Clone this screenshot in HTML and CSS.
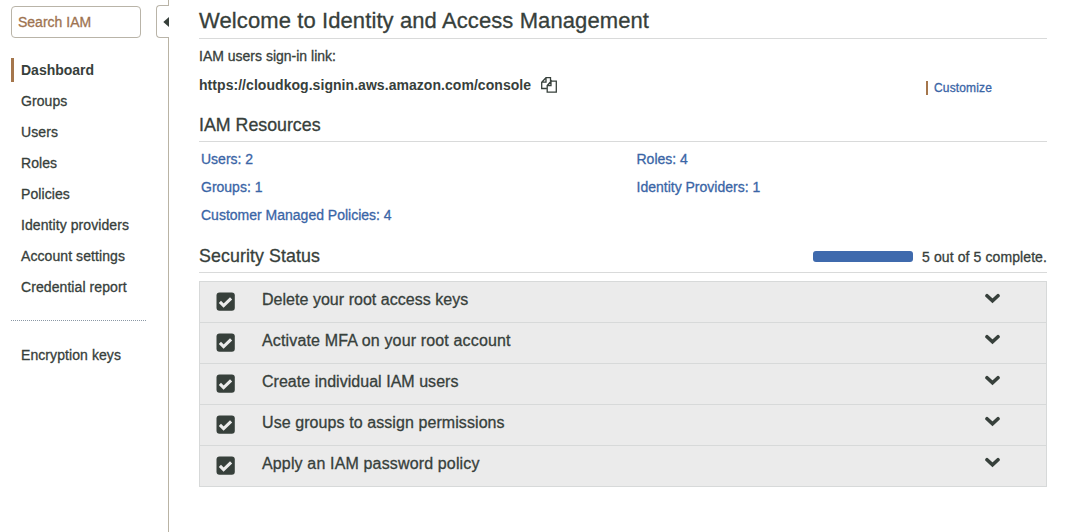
FILE: index.html
```html
<!DOCTYPE html>
<html lang="en">
<head>
<meta charset="utf-8">
<title>IAM Management Console</title>
<link rel="stylesheet" href="styles.css">
</head>
<body>
<svg class="defs" width="0" height="0">
  <symbol id="check" viewBox="0 0 19 19"><rect x=".5" y=".4" width="18.3" height="18.4" rx="3" fill="#37403b"/><path d="M3.900 9.900l3.700 3.700 7.500-7.200" fill="none" stroke="#ebebeb" stroke-width="3.100"/></symbol>
  <symbol id="chevron" viewBox="0 0 16 11"><path d="M3 2.700L8.500 7.800l5.500-5.100" fill="none" stroke="#37403b" stroke-width="3.600" stroke-linecap="round"/></symbol>
</svg>
<div class="app">
  <aside class="sidebar">
    <input class="search" type="text" placeholder="Search IAM">
    <nav class="nav">
      <a class="nav-item active">Dashboard</a>
      <a class="nav-item">Groups</a>
      <a class="nav-item">Users</a>
      <a class="nav-item">Roles</a>
      <a class="nav-item">Policies</a>
      <a class="nav-item">Identity providers</a>
      <a class="nav-item">Account settings</a>
      <a class="nav-item">Credential report</a>
    </nav>
    <nav class="nav secondary">
      <a class="nav-item">Encryption keys</a>
    </nav>
    <button class="collapse" aria-label="Collapse sidebar"><svg width="6" height="10" viewBox="0 0 6 10"><path d="M6 0v10L.3 5z" fill="#37403b"/></svg></button>
  </aside>
  <main class="main">
    <h1 class="title">Welcome to Identity and Access Management</h1>
    <p class="label">IAM users sign-in link:</p>
    <div class="link-row">
      <span class="url">https://cloudkog.signin.aws.amazon.com/console</span>
      <svg class="copy" width="18" height="18" viewBox="0 0 18 18" fill="none" stroke="#37403b" stroke-width="1.3"><path d="M6.500 12.500H1.700V6.200L6 1.700h4.500V5M6 1.700v4.500H1.700M11 5.200h5.300v11H7.200V9.500L11 5.200v4.300H7.200"/></svg>
      <a class="customize">Customize</a>
    </div>
    <h2 class="heading">IAM Resources</h2>
    <div class="resources">
      <a>Users: 2</a><a>Roles: 4</a>
      <a>Groups: 1</a><a>Identity Providers: 1</a>
      <a>Customer Managed Policies: 4</a>
    </div>
    <div class="heading status">
      <h2 class="status-title">Security Status</h2>
      <div class="progress"></div>
      <span class="complete">5 out of 5 complete.</span>
    </div>
    <ul class="checks">
      <li class="check"><svg class="box"><use href="#check"/></svg><span class="name tight">Delete your root access keys</span><svg class="chevron"><use href="#chevron"/></svg></li>
      <li class="check"><svg class="box"><use href="#check"/></svg><span class="name wide">Activate MFA on your root account</span><svg class="chevron"><use href="#chevron"/></svg></li>
      <li class="check"><svg class="box"><use href="#check"/></svg><span class="name tight">Create individual IAM users</span><svg class="chevron"><use href="#chevron"/></svg></li>
      <li class="check"><svg class="box"><use href="#check"/></svg><span class="name">Use groups to assign permissions</span><svg class="chevron"><use href="#chevron"/></svg></li>
      <li class="check"><svg class="box"><use href="#check"/></svg><span class="name wide">Apply an IAM password policy</span><svg class="chevron"><use href="#chevron"/></svg></li>
    </ul>
  </main>
</div>
</body>
</html>
```
FILE: styles.css
```css
* { box-sizing: border-box; margin: 0; padding: 0; }
body {
  background: #fff;
  color: #37403b;
  font: 14px/20px "Liberation Sans", Arial, sans-serif;
  -webkit-text-stroke: 0.3px currentColor;
  overflow: hidden;
}
.defs { display: block; }
.app { display: flex; height: 532px; }

.sidebar {
  position: relative;
  width: 169px;
  padding: 6px 22px 0 11px;
  border-right: 1px solid #b9b3a4;
}
.search {
  display: block;
  width: 130px;
  height: 32px;
  padding: 0 6px;
  border: 1px solid #b9b4a8;
  border-radius: 4px;
  font: inherit;
}
.search::placeholder { color: #9e7350; opacity: 1; }
.nav { display: flex; flex-direction: column; padding-top: 17px; }
.nav-item {
  height: 31px;
  padding-left: 10px;
  line-height: 30px;
  letter-spacing: 0.08px;
}
.active {
  font-weight: bold;
  letter-spacing: 0;
  -webkit-text-stroke-width: 0;
  background: linear-gradient(#a5764c, #a5764c) left 3px / 3px 24px no-repeat;
}
.secondary {
  width: 135px;
  margin-top: 17px;
  padding-top: 19px;
  border-top: 1px dotted #8b98a5;
}
.collapse {
  position: absolute;
  top: 5px;
  right: -1px;
  display: flex;
  align-items: center;
  justify-content: flex-end;
  width: 13px;
  height: 33px;
  border: 1px solid #b9b4a8;
  border-right: 0;
  border-radius: 4px 0 0 4px;
  background: #fff;
}

.main { width: 848px; margin-left: 30px; }
.title {
  height: 39px;
  padding-top: 5px;
  border-bottom: 1px solid #d9dada;
  font-size: 22px;
  font-weight: normal;
  line-height: 31px;
  letter-spacing: 0.1px;
}
.label { margin-top: 7px; }
.link-row { display: flex; align-items: center; margin-top: 9px; height: 20px; }
.url { font-weight: bold; letter-spacing: 0.05px; -webkit-text-stroke-width: 0; }
.copy { margin-left: 9px; }
.customize {
  margin: 5px 55px 0 auto;
  padding-left: 6px;
  border-left: 2px solid #a5764c;
  color: #3a65a6;
  font-size: 12px;
  line-height: 14px;
  letter-spacing: 0.14px;
}
.heading {
  height: 29px;
  margin-top: 18px;
  border-bottom: 1px solid #d9dada;
  font-size: 17.8px;
  font-weight: normal;
  line-height: 24px;
}
.resources {
  display: grid;
  grid-template-columns: 435.5px 1fr;
  padding: 3px 0 0 2px;
  line-height: 28px;
  color: #3a65a6;
}
.status { display: flex; margin-top: 15px; }
.status-title { font: inherit; letter-spacing: 0.1px; }
.progress {
  width: 100px;
  height: 11px;
  margin: 7px 9px 0 auto;
  border-radius: 3px;
  background: #3f6aad;
}
.complete { padding-top: 1px; font-size: 14px; letter-spacing: 0.1px; }
.checks {
  margin-top: 8px;
  border: 1px solid #d7d9d9;
  background: #ebebeb;
  list-style: none;
}
.check { display: flex; height: 41px; border-bottom: 1px solid #d7d9d9; }
.check:last-child { height: 40px; border-bottom: 0; }
.box { width: 19px; height: 19px; margin: 10px 27px 0 16px; }
.name { font-size: 16px; line-height: 35px; letter-spacing: 0.08px; }
.name.tight { letter-spacing: 0.03px; }
.name.wide { letter-spacing: 0.15px; }
.chevron { width: 16px; height: 11px; margin: 11px 46px 0 auto; }
```
